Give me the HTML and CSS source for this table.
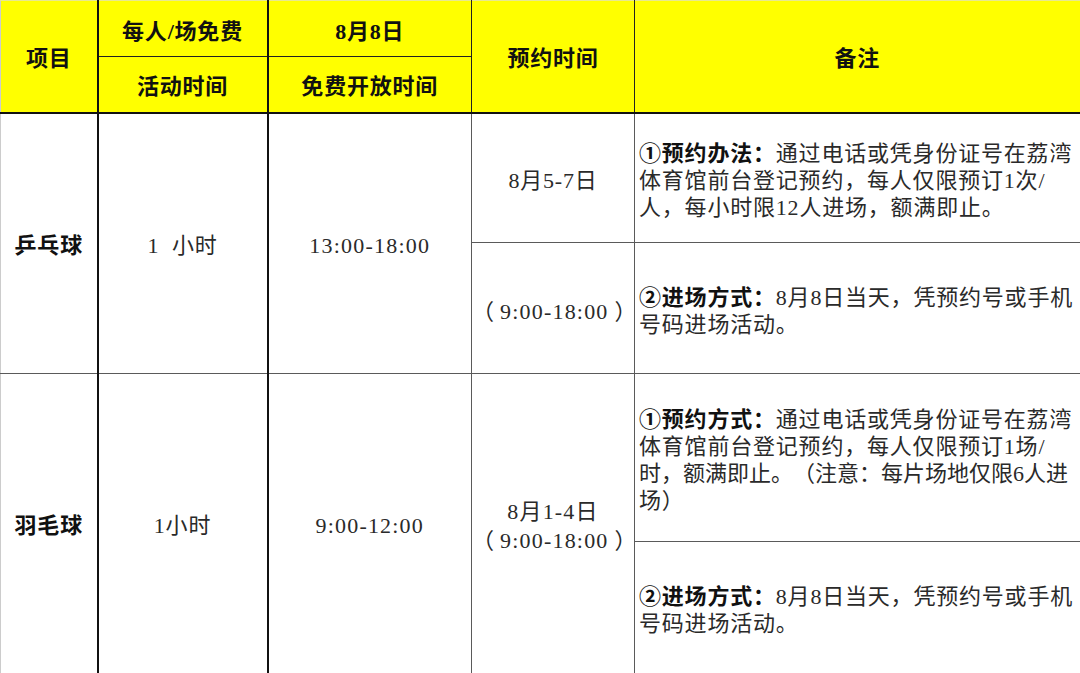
FILE: index.html
```html
<!DOCTYPE html>
<html lang="zh-CN">
<head>
<meta charset="utf-8">
<title>免费开放</title>
<link rel="stylesheet" href="styles.css">
</head>
<body>
<table class="sched">
  <colgroup>
    <col class="c1"><col class="c2"><col class="c3"><col class="c4"><col class="c5">
  </colgroup>
  <tr class="h1">
    <th rowspan="2" class="dark-r">项目</th>
    <th class="dark-r">每人/场免费</th>
    <th>8月8日</th>
    <th rowspan="2">预约时间</th>
    <th rowspan="2" class="last">备注</th>
  </tr>
  <tr class="h2">
    <th class="dark-r">活动时间</th>
    <th>免费开放时间</th>
  </tr>
  <tr class="r1a">
    <td rowspan="2" class="sport dark-r">乒乓球</td>
    <td rowspan="2" class="dark-r">1&nbsp; 小时</td>
    <td rowspan="2" class="num">13:00-18:00</td>
    <td>8月5-7日</td>
    <td class="note last"><b>①预约办法：</b>通过电话或凭身份证号在荔湾<br>体育馆前台登记预约，每人仅限预订1次/<br>人，每小时限12人进场，额满即止。</td>
  </tr>
  <tr class="r1b">
    <td class="num"><span class="cjk open">（</span>9:00-18:00<span class="cjk close">）</span></td>
    <td class="note last"><b>②进场方式：</b>8月8日当天，凭预约号或手机<br>号码进场活动。</td>
  </tr>
  <tr class="r2a">
    <td rowspan="2" class="sport dark-r">羽毛球</td>
    <td rowspan="2" class="dark-r">1小时</td>
    <td rowspan="2" class="num">9:00-12:00</td>
    <td rowspan="2" class="num">8月1-4日<br><span class="cjk open">（</span>9:00-18:00<span class="cjk close">）</span></td>
    <td class="note last"><b>①预约方式：</b>通过电话或凭身份证号在荔湾<br>体育馆前台登记预约，每人仅限预订1场/<br><span class="tight">时，额满即止。（注意：每片场地仅限6人进</span><br>场）</td>
  </tr>
  <tr class="r2b">
    <td class="note last"><b>②进场方式：</b>8月8日当天，凭预约号或手机<br>号码进场活动。</td>
  </tr>
</table>
</body>
</html>
```
FILE: styles.css
```css
html, body {
  margin: 0;
  padding: 0;
  background: #ffffff;
}

.sched {
  width: 1080px;
  table-layout: fixed;
  border-collapse: collapse;
  font-family: "Liberation Serif", "Noto Sans CJK SC", serif;
  font-size: 22px;
  letter-spacing: 0.8px;
  line-height: 27px;
  color: #2a2a2a;
  text-spacing-trim: space-all;
}

.c1 { width: 97px; }
.c2 { width: 170px; }
.c3 { width: 204px; }
.c4 { width: 163px; }
.c5 { width: 446px; }

.sched th,
.sched td {
  border: 1.5px solid #5a5a5a;
  text-align: center;
  vertical-align: middle;
  padding: 5px 0 0 0;
  white-space: nowrap;
}

.sched td.num {
  letter-spacing: 1.2px;
}

.cjk {
  font-family: "Noto Sans CJK SC", sans-serif;
  letter-spacing: 0;
}

.open {
  margin-right: 6px;
}

.close {
  margin-left: 6px;
}

.tight {
  letter-spacing: 0;
}

.sched th {
  background: #ffff00;
  color: #111;
  font-weight: 700;
  border-color: #222;
  border-top: 1px solid #e8e890;
}

.sched tr.h1 th[rowspan],
.sched tr.h2 th {
  border-bottom: 2px solid #111;
}

.sched tr.h1 th:first-child {
  border-left: 1px solid #cccccc;
}

.sched td.sport {
  border-left: 1px solid #cccccc;
  font-weight: 700;
  color: #111;
}

.dark-r {
  border-right: 2px solid #111 !important;
}

.last {
  border-right: 2px solid #111 !important;
}

.h1 { height: 56px; }
.h2 { height: 56px; }
.r1a { height: 130px; }
.r1b { height: 131px; }
.r2a { height: 168px; }
.r2b { height: 132px; }

.sched td.note {
  text-align: left;
  padding-left: 4px;
  letter-spacing: 0.8px;
}

.note b {
  font-weight: 700;
  color: #111;
}

.r2b td {
  border-bottom: 2px solid #222;
}
.r2a td[rowspan] {
  border-bottom: 2px solid #222;
}
```
